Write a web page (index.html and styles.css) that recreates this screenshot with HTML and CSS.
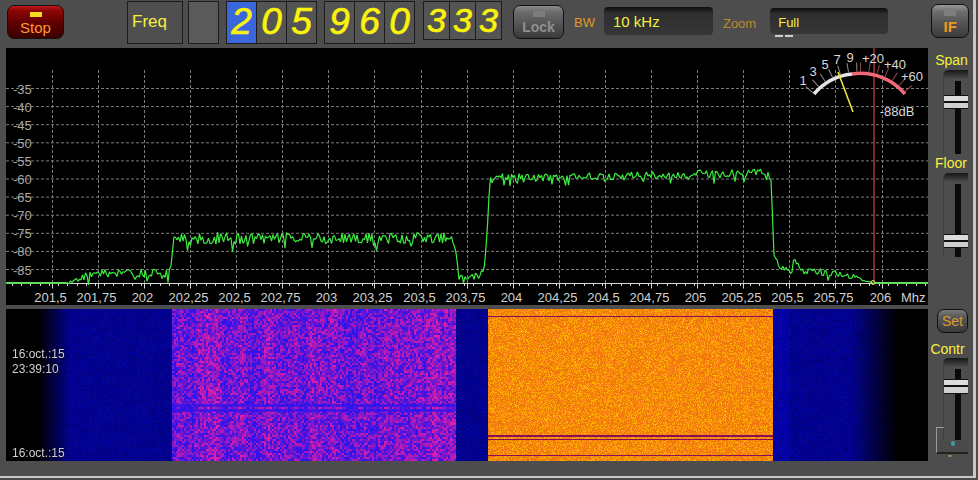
FILE: index.html
```html
<!DOCTYPE html>
<html lang="en">
<head>
    <meta charset="UTF-8">
    <meta name="viewport" content="width=device-width, initial-scale=1.0">
    <title>SDR Receiver</title>
    <link rel="stylesheet" href="styles.css">
</head>
<body>
    <div class="window">
        <div class="toolbar">
            <button class="hw-button stop"><span class="led"></span>Stop</button>
            <div class="box freq-label">Freq</div>
            <div class="box blank"></div>
            <div class="digits first">
                <span class="digit active">2</span>
                <span class="digit">0</span>
                <span class="digit">5</span>
            </div>
            <div class="digits second">
                <span class="digit">9</span>
                <span class="digit">6</span>
                <span class="digit">0</span>
            </div>
            <div class="digits third">
                <span class="digit">3</span>
                <span class="digit">3</span>
                <span class="digit">3</span>
            </div>
            <button class="hw-button lock"><span class="led"></span>Lock</button>
            <span class="caption bw-caption">BW</span>
            <div class="field bw-field">10 kHz</div>
            <span class="caption zoom-caption">Zoom</span>
            <div class="field zoom-field">Full<span class="dashes"></span></div>
            <button class="hw-button if-button"><span class="led"></span>IF</button>
        </div>

        <div class="main">
            <div class="displays">
                <div class="spectrum">
                    <svg id="plot" class="plot" width="922" height="257"></svg>
                    <svg class="meter" width="140" height="80" viewBox="0 0 140 80">
                        <path class="ticks-white" d="M19 42 A64 64 0 0 1 70 19"></path>
                        <path class="ticks-red" d="M70 19 A64 64 0 0 1 120 42"></path>
                        <path class="arc-white" d="M24 46 A58 58 0 0 1 62 26"></path>
                        <path class="arc-red" d="M62 26 A58 58 0 0 1 115 46"></path>
                        <line class="needle" x1="48" y1="24" x2="63" y2="64"></line>
                        <text x="13" y="37">1</text>
                        <text x="23" y="28">3</text>
                        <text x="35" y="21">5</text>
                        <text x="47" y="16">7</text>
                        <text x="60" y="14">9</text>
                        <text x="83" y="15">+20</text>
                        <text x="105" y="21">+40</text>
                        <text x="122" y="33">+60</text>
                        <text x="107" y="68">-88dB</text>
                    </svg>
                </div>
                <div class="waterfall">
                    <canvas id="falls" width="922" height="152"></canvas>
                    <div class="stamp stamp-top">16:oct.:15<br>23:39:10</div>
                    <div class="stamp stamp-bottom">16:oct.:15</div>
                </div>
            </div>

            <div class="side">
                <div class="side-label span-label">Span</div>
                <div class="slider span-slider"><span class="track"></span><span class="thumb"></span></div>
                <div class="side-label floor-label">Floor</div>
                <div class="slider floor-slider"><span class="track"></span><span class="thumb"></span></div>
                <button class="hw-button set">Set</button>
                <div class="side-label contr-label">Contr</div>
                <div class="slider contr-slider"><span class="track"></span><span class="thumb"></span></div>
                <div class="grip"><span class="grip-dot"></span></div>
                <div class="grip-marks">''</div>
            </div>
        </div>
    </div>
    <script src="script.js"></script>
</body>
</html>
```

FILE: styles.css
```css
body {
    margin: 0;
    width: 978px;
    height: 480px;
    overflow: hidden;
    background-color: #4b4b4b;
    font-family: "Liberation Sans", Arial, sans-serif;
}

.window {
    width: 973px;
    height: 476px;
    border-right: 3px solid #c8c8c8;
    border-bottom: 2px solid #c8c8c8;
    background-color: #4d4d4d;
}

.toolbar {
    display: flex;
    align-items: flex-start;
    height: 48px;
}

.hw-button {
    display: flex;
    flex-direction: column;
    align-items: center;
    box-sizing: border-box;
    padding: 0;
    border: 1px solid #111;
    border-radius: 7px;
    font-family: inherit;
    font-size: 13px;
    font-weight: bold;
}

.led {
    display: block;
    flex: none;
}

.stop {
    width: 57px;
    height: 34px;
    margin: 5px 0 0 7px;
    padding-top: 6px;
    background: linear-gradient(#c01818 0, #8a0505 15%, #5e0000 55%, #380000 100%);
    color: #ff9a2e;
    font-weight: normal;
    font-size: 15px;
    line-height: 15px;
}

.stop .led {
    width: 12px;
    height: 5px;
    margin-bottom: 3px;
    background-color: #f4dc20;
}

.box {
    box-sizing: border-box;
    height: 43px;
    margin-top: 1px;
    border: 1px solid #1c1c1c;
    background-color: #4f4f4f;
}

.freq-label {
    width: 56px;
    margin-left: 63px;
    padding: 10px 0 0 4px;
    color: #f5f040;
    font-size: 17px;
}

.blank {
    width: 31px;
    margin-left: 5px;
    background-color: #5a5a5a;
}

.digits {
    display: flex;
    margin-top: 1px;
}

.first {
    margin-left: 7px;
}

.second {
    margin-left: 8px;
}

.third {
    margin-left: 9px;
}

.digit {
    box-sizing: border-box;
    width: 31px;
    height: 43px;
    border: 1px solid #1c1c1c;
    margin-right: -1px;
    background-color: #545454;
    color: #fbf20c;
    font-size: 37px;
    font-style: italic;
    line-height: 40px;
    text-align: center;
    -webkit-text-stroke: 0.7px #fbf20c;
}

.digit.active {
    background-color: #3c66dc;
}

.third .digit {
    width: 27px;
    height: 39px;
    font-size: 34px;
    line-height: 37px;
}

.lock {
    width: 51px;
    height: 34px;
    margin: 5px 0 0 12px;
    padding-top: 5px;
    background: linear-gradient(#8a8a8a 0, #6a6a6a 20%, #555 55%, #3a3a3a 100%);
    color: #8f8f8f;
    font-size: 14px;
    line-height: 15px;
}

.lock .led {
    width: 12px;
    height: 6px;
    margin-bottom: 3px;
    background-color: #7d7d7d;
}

.caption {
    margin-top: 15px;
    color: #e09a20;
    font-size: 13px;
}

.bw-caption {
    margin-left: 10px;
}

.field {
    position: relative;
    box-sizing: border-box;
    border-radius: 4px;
    background: linear-gradient(#0c0c0c 0, #2e2e2e 22%, #363636 100%);
    color: #f5f040;
}

.bw-field {
    width: 109px;
    height: 28px;
    margin: 7px 0 0 9px;
    padding: 6px 0 0 9px;
    font-size: 15px;
}

.zoom-caption {
    margin-left: 10px;
    margin-top: 16px;
    color: #b98a2c;
}

.zoom-field {
    width: 118px;
    height: 26px;
    margin: 8px 0 0 14px;
    padding: 7px 0 0 8px;
    font-size: 13px;
}

.dashes {
    position: absolute;
    left: 5px;
    top: 27px;
    width: 8px;
    height: 2px;
    background-color: #cfcfcf;
    box-shadow: 10px 0 0 #cfcfcf;
}

.if-button {
    width: 38px;
    height: 34px;
    margin: 4px 0 0 43px;
    padding-top: 5px;
    background: linear-gradient(#9a9a9a 0, #6e6e6e 20%, #555 55%, #3a3a3a 100%);
    color: #f09a20;
    font-size: 15px;
    line-height: 15px;
}

.if-button .led {
    width: 12px;
    height: 6px;
    margin-bottom: 3px;
    background-color: #7d7d7d;
}

.main {
    display: flex;
    margin-left: 6px;
}

.displays {
    width: 922px;
}

.spectrum {
    position: relative;
    height: 257px;
    margin-bottom: 4px;
    background-color: #000;
}

.plot {
    display: block;
    font-family: inherit;
}

.plot .grid {
    stroke: #7c7c7c;
    stroke-width: 1;
    stroke-dasharray: 3 2;
}

.plot .axis {
    stroke: #d8d8d8;
    stroke-width: 1;
}

.plot .floor {
    stroke: #63dc5e;
    stroke-width: 2;
}

.plot .trace {
    fill: none;
    stroke: #3cec40;
    stroke-width: 1.2;
    stroke-linejoin: bevel;
}

.plot .cursor {
    stroke: #a83434;
    stroke-width: 1.5;
}

.plot .marker {
    fill: none;
    stroke: #e6e64a;
    stroke-width: 1;
}

.plot text {
    fill: #d0d0d0;
    font-size: 13px;
}

.plot .level {
    fill: #a8a8a8;
}

.meter {
    position: absolute;
    left: 784px;
    top: 0;
}

.meter path {
    fill: none;
}

.meter text {
    fill: #d8d8d8;
    font-size: 13px;
    text-anchor: middle;
}

.ticks-white {
    stroke: #8c8c8c;
    stroke-width: 9;
    stroke-dasharray: 1 8;
}

.ticks-red {
    stroke: #8e4a4e;
    stroke-width: 9;
    stroke-dasharray: 1 8;
}

.arc-white {
    stroke: #e4e4e4;
    stroke-width: 3.5;
}

.arc-red {
    stroke: #f06a78;
    stroke-width: 3.5;
}

.needle {
    stroke: #f2e83c;
    stroke-width: 1.5;
}

.waterfall {
    position: relative;
    height: 152px;
    background-color: #000;
}

.waterfall canvas {
    display: block;
}

.stamp {
    position: absolute;
    left: 6px;
    color: #cfcfcf;
    font-size: 12px;
    line-height: 15px;
    text-shadow: 0 0 2px #000;
}

.stamp-top {
    top: 38px;
}

.stamp-bottom {
    top: 137px;
}

.side {
    position: relative;
    width: 45px;
}

.side-label {
    color: #f5f040;
    font-size: 14px;
    text-align: center;
    line-height: 15px;
}

.span-label {
    margin: 5px 0 0 2px;
}

.floor-label {
    margin: 2px 0 0 1px;
}

.contr-label {
    margin-top: 9px;
    padding-right: 6px;
}

.slider {
    position: relative;
    box-sizing: border-box;
    width: 25px;
    margin-left: 15px;
    border-left: 1px solid #3c3c3c;
    border-radius: 5px 0 0 0;
    background: linear-gradient(#161616 0, #4d4d4d 9px);
}

.track {
    position: absolute;
    left: 11px;
    top: 11px;
    bottom: 0;
    width: 6px;
    background-color: #0a0a0a;
}

.thumb {
    position: absolute;
    left: 0;
    right: 0;
    box-sizing: border-box;
    height: 14px;
    border-top: 1px solid #111;
    border-bottom: 1px solid #111;
    background: linear-gradient(#dcdcdc 0 5px, #111 5px 7px, #d0d0d0 7px);
}

.span-slider {
    height: 84px;
    margin-top: 2px;
}

.span-slider .thumb {
    top: 25px;
}

.floor-slider {
    height: 84px;
    margin-top: 2px;
}

.floor-slider .thumb {
    top: 61px;
}

.set {
    width: 31px;
    height: 24px;
    margin: 52px 0 0 9px;
    padding-top: 3px;
    background: linear-gradient(#7c7c7c 0, #5a5a5a 30%, #3a3a3a 100%);
    color: #d89a30;
    font-weight: normal;
    font-size: 14px;
}

.contr-slider {
    height: 82px;
    margin-top: 1px;
}

.contr-slider .thumb {
    top: 21px;
    height: 15px;
}

.grip {
    position: absolute;
    left: 8px;
    top: 379px;
    box-sizing: border-box;
    width: 32px;
    height: 27px;
    border-left: 1px solid #9a9a9a;
    border-bottom: 2px solid #222;
    background: linear-gradient(#9a9a9a, #9a9a9a) 0 0 / 7px 1px no-repeat,
        linear-gradient(transparent 0 14px, #4a4a4a 14px);
}

.grip-dot {
    position: absolute;
    left: 14px;
    top: 14px;
    width: 4px;
    height: 5px;
    border-radius: 2px;
    background-color: #3b9ca0;
}

.grip-marks {
    position: absolute;
    left: 20px;
    top: 405px;
    color: #e0d860;
    font-size: 9px;
    line-height: 10px;
}
```

FILE: script.js
```js
// Small seeded generator so the noise looks the same every load
let seed = 20151016;
function rnd() {
    seed = (seed + 0x6D2B79F5) | 0;
    let t = Math.imul(seed ^ (seed >>> 15), 1 | seed);
    t = (t + Math.imul(t ^ (t >>> 7), 61 | t)) ^ t;
    return ((t ^ (t >>> 14)) >>> 0) / 4294967296;
}

// Plot coordinates are page coordinates minus the panel offset
const OX = 6;
const OY = 48;
const AXIS_Y = 283.5 - OY;

// Level of the trace as [x, y, noise] key points
const keys = [
    [66, 283, 0], [72, 281, 2], [90, 274, 5], [168, 273, 5], [171, 266, 1],
    [174, 238, 3], [180, 238, 7], [454, 238, 6], [457, 262, 2], [460, 276, 5],
    [478, 277, 5], [484, 270, 2], [487, 235, 1], [490, 178, 2], [500, 175, 5],
    [530, 178, 4], [768, 173, 5], [771, 180, 2], [774, 255, 2], [780, 268, 3],
    [790, 272, 4], [795, 258, 2], [800, 270, 4], [845, 274, 4], [860, 279, 2],
    [873, 283, 0]
];

function levelAt(x) {
    for (let i = 1; i < keys.length; i++) {
        if (x <= keys[i][0]) {
            const a = keys[i - 1];
            const b = keys[i];
            const f = (x - a[0]) / (b[0] - a[0]);
            return [a[1] + (b[1] - a[1]) * f, a[2] + (b[2] - a[2]) * f];
        }
    }
    return [283, 0];
}

function drawPlot() {
    let html = '';

    // Horizontal grid, -35 to -85 dB
    for (let i = 0; i <= 10; i++) {
        const y = 88.5 + i * 18.1 - OY;
        html += `<line class="grid" x1="0" x2="922" y1="${y}" y2="${y}"></line>`;
        html += `<text class="level" x="7" y="${y + 5}">-${35 + i * 5}</text>`;
    }

    // Vertical grid and frequency labels
    const labels = ['201,5', '201,75', '202', '202,25', '202,5', '202,75', '203', '203,25', '203,5',
        '203,75', '204', '204,25', '204,5', '204,75', '205', '205,25', '205,5', '205,75', '206'];
    for (let i = 0; i < 20; i++) {
        const x = Math.round(51.7 + i * 46.1 - OX) + 0.5;
        html += `<line class="grid" x1="${x}" x2="${x}" y1="22" y2="${AXIS_Y}"></line>`;
        html += `<line class="axis" x1="${x}" x2="${x}" y1="${AXIS_Y}" y2="${AXIS_Y + 5}"></line>`;
        if (labels[i]) {
            html += `<text x="${x - 2}" y="${AXIS_Y + 18}" text-anchor="middle">${labels[i]}</text>`;
        }
    }
    html += `<text x="895" y="${AXIS_Y + 18}">Mhz</text>`;

    // Axis with minor ticks
    html += `<line class="axis" x1="0" x2="922" y1="${AXIS_Y}" y2="${AXIS_Y}"></line>`;
    for (let x = 6; x < 922; x += 9.22) {
        const tx = Math.round(x) + 0.5;
        html += `<line class="axis" x1="${tx}" x2="${tx}" y1="${AXIS_Y}" y2="${AXIS_Y + 2.5}"></line>`;
    }
    html += `<line class="floor" x1="0" x2="60" y1="${AXIS_Y - 0.5}" y2="${AXIS_Y - 0.5}"></line>`;
    html += `<line class="floor" x1="867" x2="922" y1="${AXIS_Y - 0.5}" y2="${AXIS_Y - 0.5}"></line>`;

    // Cursor
    html += `<line class="cursor" x1="868" x2="868" y1="0" y2="${AXIS_Y}"></line>`;

    // Trace, with the odd deeper dip
    let points = '';
    for (let x = 66; x <= 873; x += 1.5) {
        const level = levelAt(x);
        let y = level[0] + (rnd() - 0.5) * level[1] * 1.8;
        if (rnd() < 0.07) {
            y += level[1] * 1.3;
        }
        points += `${(x - OX).toFixed(1)},${(y - OY).toFixed(1)} `;
    }
    html += `<polyline class="trace" points="${points}"></polyline>`;
    html += `<circle class="marker" cx="867" cy="${AXIS_Y - 1}" r="2"></circle>`;

    document.getElementById('plot').innerHTML = html;
}

function lerp(a, b, t) {
    return a + (b - a) * t;
}

function drawFalls() {
    const canvas = document.getElementById('falls');
    const ctx = canvas.getContext('2d');
    const W = canvas.width;
    const H = canvas.height;

    // Slow vertical streaks, and a coarser grain for the weak band
    const streak = [];
    let s = 0;
    for (let x = 0; x <= W; x++) {
        if (x % 3 === 0) {
            s = s * 0.7 + (rnd() - 0.5) * 0.28;
        }
        streak.push(s);
    }
    const coarse = [];
    for (let i = 0; i < (W >> 1) * ((H >> 1) + 1); i++) {
        coarse.push(rnd());
    }

    for (let y = 0; y < H; y++) {
        const py = y + 309;
        for (let x = 0; x < W; x++) {
            const px = x + OX;
            let r = 0;
            let g = 0;
            let b = 0;

            if (px >= 172 && px < 456) {
                // Weak signal band
                const n = coarse[(y >> 1) * (W >> 1) + (x >> 1)];
                let t = Math.min(1, Math.max(0, n * 0.95 + streak[x] - 0.05));
                if (Math.abs(py - 405) < 2 || Math.abs(py - 410) < 1.5) {
                    t *= 0.25;
                }
                r = lerp(45, 235, t);
                g = lerp(20, 30, t);
                b = lerp(235, 160, t);
            } else if (px >= 488 && px < 773) {
                // Strong signal band
                const n = rnd();
                r = lerp(236, 255, n);
                g = lerp(105, 185, n * n + 0.1);
                b = lerp(20, 0, n);
                if (py === 316 || py === 435 || py === 436 || py === 439 || py === 455) {
                    r = 135;
                    g = 15;
                    b = 90;
                }
            } else {
                // Noise floor, fading to black at both edges
                const n = rnd();
                let fade = 1;
                if (px < 70) {
                    fade = Math.max(0, (px - 38) / 32);
                } else if (px > 850) {
                    fade = Math.max(0, (897 - px) / 47);
                }
                const edge = px > 773 && px < 790 ? 20 : 0;
                r = 6 * n * fade;
                g = 4 * n * fade;
                b = (122 + 42 * n + edge) * fade;
            }

            ctx.fillStyle = `rgb(${Math.round(r)},${Math.round(g)},${Math.round(b)})`;
            ctx.fillRect(x, y, 1, 1);
        }
    }
}

drawPlot();
drawFalls();
```
